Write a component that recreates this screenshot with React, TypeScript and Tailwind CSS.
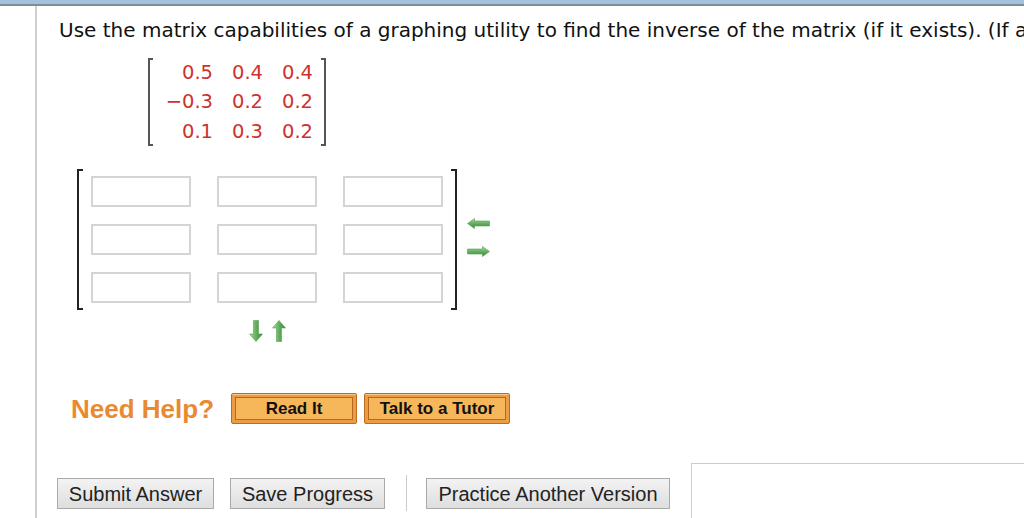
import React from 'react';

const given = [
  ['0.5', '0.4', '0.4'],
  ['\u22120.3', '0.2', '0.2'],
  ['0.1', '0.3', '0.2'],
];

const ArrowH = ({ dir }: { dir: 'left' | 'right' }) => (
  <svg width="23" height="11" viewBox="0 0 23 11">
    <defs>
      <linearGradient id={`gh-${dir}`} x1="0" y1="0" x2="0" y2="1">
        <stop offset="0" stopColor="#a8dba3" />
        <stop offset="0.5" stopColor="#62b05c" />
        <stop offset="1" stopColor="#3c8839" />
      </linearGradient>
    </defs>
    {dir === 'left' ? (
      <polygon points="0.5,5.5 7.5,0.5 7.5,3 22.5,3 22.5,8 7.5,8 7.5,10.5" fill={`url(#gh-${dir})`} stroke="#5d9c58" strokeWidth="0.6" />
    ) : (
      <polygon points="22.5,5.5 15.5,0.5 15.5,3 0.5,3 0.5,8 15.5,8 15.5,10.5" fill={`url(#gh-${dir})`} stroke="#5d9c58" strokeWidth="0.6" />
    )}
  </svg>
);

const ArrowV = ({ dir }: { dir: 'up' | 'down' }) => (
  <svg width="14" height="22" viewBox="0 0 14 22">
    <defs>
      <linearGradient id={`gv-${dir}`} x1="0" y1="0" x2="1" y2="0">
        <stop offset="0" stopColor="#a8dba3" />
        <stop offset="0.5" stopColor="#62b05c" />
        <stop offset="1" stopColor="#3c8839" />
      </linearGradient>
    </defs>
    {dir === 'down' ? (
      <polygon points="7,21.5 0.5,14 4.5,14 4.5,0.5 9.5,0.5 9.5,14 13.5,14" fill={`url(#gv-${dir})`} stroke="#5d9c58" strokeWidth="0.6" />
    ) : (
      <polygon points="7,0.5 0.5,8 4.5,8 4.5,21.5 9.5,21.5 9.5,8 13.5,8" fill={`url(#gv-${dir})`} stroke="#5d9c58" strokeWidth="0.6" />
    )}
  </svg>
);

const OrangeButton = ({ label, width }: { label: string; width: string }) => (
  <button className={`${width} h-[31px] rounded-[2px] border border-[#c06a1c] bg-[#eb9c45] p-[3px] shadow-[inset_0_1px_0_#f8c98a]`}>
    <span className="flex h-full w-full items-center justify-center border border-[#b8671f] bg-[#f5b75a] text-[17px] font-bold text-[#111] [font-family:'Liberation_Sans',Arial,sans-serif]">
      {label}
    </span>
  </button>
);

const GrayButton = ({ label, width }: { label: string; width: string }) => (
  <button className={`${width} h-[31px] border border-[#a9a9a9] bg-gradient-to-b from-[#f3f3f3] to-[#dedede] text-[20px] text-[#222] [font-family:'Liberation_Sans',Arial,sans-serif]`}>
    {label}
  </button>
);

export default function App() {
  return (
    <div className="relative h-[518px] w-[1024px] overflow-hidden bg-white">
      <div className="h-[4px] bg-[#a3c1df]" />
      <div className="h-[2px] bg-[#7c8e9a]" />
      <div className="flex h-[512px]">
        <div className="w-[35px] shrink-0" />
        <div className="w-[2px] shrink-0 bg-[#cfcfcf]" />
        <div className="flex min-w-0 flex-col pl-[22px]">
          <p className="mt-[13px] whitespace-nowrap text-[20px] leading-[22px] text-[#111] [font-family:'DejaVu_Sans',Verdana,sans-serif]">
            Use the matrix capabilities of a graphing utility to find the inverse of the matrix (if it exists). (If a
          </p>

          {/* given matrix */}
          <div className="ml-[89px] mt-[17px] flex h-[88px] w-[178px] items-stretch">
            <div className="w-[6px] border-y-2 border-l-2 border-[#555]" />
            <div className="flex flex-1 flex-col justify-center pr-[8px] text-[19.5px] text-[#d0312d] [font-family:'DejaVu_Sans',Verdana,sans-serif]">
              {given.map((row, i) => (
                <div key={i} className="flex h-[30px] items-center justify-end">
                  {row.map((v, j) => (
                    <span key={j} className={`text-right ${j === 0 ? 'w-[60px]' : 'w-[50px]'}`}>
                      {v}
                    </span>
                  ))}
                </div>
              ))}
            </div>
            <div className="w-[6px] border-y-2 border-r-2 border-[#555]" />
          </div>

          {/* answer matrix */}
          <div className="mt-[23px] flex items-center">
            <div className="ml-[18px] flex h-[141px] items-stretch">
              <div className="w-[6px] border-y-2 border-l-2 border-[#222]" />
              <div className="grid grid-cols-3 content-center gap-x-[26px] gap-y-[17px] px-[8px]">
                {Array.from({ length: 9 }).map((_, i) => (
                  <input
                    key={i}
                    className="h-[31px] w-[100px] border-2 border-[#d4d4d4] bg-white outline-none"
                  />
                ))}
              </div>
              <div className="w-[6px] border-y-2 border-r-2 border-[#222]" />
            </div>
            <div className="mb-[4px] ml-[10px] flex flex-col gap-[17px]">
              <ArrowH dir="left" />
              <ArrowH dir="right" />
            </div>
          </div>

          <div className="ml-[190px] mt-[10px] flex gap-[9px]">
            <ArrowV dir="down" />
            <ArrowV dir="up" />
          </div>

          {/* help */}
          <div className="mt-[51px] flex items-center">
            <span className="ml-[12px] text-[26px] leading-[30px] font-bold text-[#e98a32] [font-family:'Liberation_Sans',Arial,sans-serif]">
              Need Help?
            </span>
            <div className="ml-[17px] flex gap-[7px]">
              <OrangeButton label="Read It" width="w-[126px]" />
              <OrangeButton label="Talk to a Tutor" width="w-[146px]" />
            </div>
          </div>

          {/* bottom */}
          <div className="mt-[39px] flex items-end">
            <div className="mb-[8px] flex items-center">
              <div className="ml-[-2px] flex gap-[16px]">
                <GrayButton label="Submit Answer" width="w-[157px]" />
                <GrayButton label="Save Progress" width="w-[155px]" />
              </div>
              <div className="ml-[21px] h-[36px] w-px bg-[#cccccc]" />
              <div className="ml-[19px]">
                <GrayButton label="Practice Another Version" width="w-[244px]" />
              </div>
            </div>
            <div className="ml-[21px] h-[56px] w-[340px] border-l border-t border-[#cccccc]" />
          </div>
        </div>
      </div>
    </div>
  );
}
